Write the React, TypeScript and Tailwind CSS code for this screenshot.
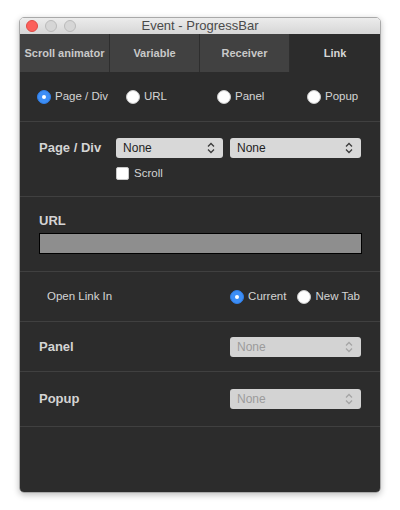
const font = "font-['Liberation_Sans',Arial,sans-serif]";

const Radio = ({ checked }: { checked?: boolean }) =>
  checked ? (
    <span className="flex h-[14px] w-[14px] shrink-0 items-center justify-center rounded-full bg-[#3d8ef6] border border-[#2f7de6]">
      <span className="h-[4px] w-[4px] rounded-full bg-white" />
    </span>
  ) : (
    <span className="h-[14px] w-[14px] shrink-0 rounded-full bg-white border border-[#c8c8c8]" />
  );

const Chevrons = ({ color }: { color: string }) => (
  <svg width="8" height="12" viewBox="0 0 8 12" fill="none" stroke={color} strokeWidth="1.3">
    <path d="M1 4.5 L4 1.5 L7 4.5" />
    <path d="M1 7.5 L4 10.5 L7 7.5" />
  </svg>
);

const Select = ({ width, disabled }: { width: string; disabled?: boolean }) => (
  <div
    className={`flex h-[20px] ${width} items-center justify-between rounded-[3px] pl-[7px] pr-[8px] text-[12px] ${
      disabled ? "bg-[#d3d3d3] text-[#9b9b9b]" : "bg-[#d8d8d8] text-[#1e1e1e]"
    }`}
  >
    <span>None</span>
    <Chevrons color={disabled ? "#a5a5a5" : "#3a3a3a"} />
  </div>
);

const tabs = ["Scroll animator", "Variable", "Receiver", "Link"];

export default function App() {
  return (
    <div className={`min-h-[510px] w-[400px] bg-white pt-[17px] pl-[19px] ${font}`}>
      <div className="w-[362px] overflow-hidden rounded-[5px] border border-[#a9a9a9] shadow-[0_2px_6px_rgba(0,0,0,0.25)]">
        {/* title bar */}
        <div className="relative flex h-[16px] items-center bg-gradient-to-b from-[#ececec] to-[#d6d6d6] px-[6px]">
          <div className="flex gap-[7px]">
            <span className="h-[12px] w-[12px] rounded-full bg-[#fc605b] border border-[#de4b45]" />
            <span className="h-[12px] w-[12px] rounded-full bg-[#d6d6d6] border border-[#bababa]" />
            <span className="h-[12px] w-[12px] rounded-full bg-[#d6d6d6] border border-[#bababa]" />
          </div>
          <div className="absolute inset-0 flex items-center justify-center text-[13px] text-[#4a4a4a]">
            Event - ProgressBar
          </div>
        </div>

        {/* tabs */}
        <div className="grid h-[38px] grid-cols-4 bg-[#2c2c2c]">
          {tabs.map((t, i) => (
            <div
              key={t}
              className={`flex items-center justify-center text-[11px] font-bold ${
                i === 3
                  ? "bg-[#2c2c2c] text-[#d6d6d6]"
                  : "bg-[#414141] text-[#c9c9c9] border-r border-[#2e2e2e]"
              }`}
            >
              {t}
            </div>
          ))}
        </div>

        <div className="bg-[#2c2c2c] text-[#d4d4d4]">
          {/* target type */}
          <div className="grid h-[50px] grid-cols-[89px_91px_90px_auto] items-center border-b border-[#404040] pl-[17px] text-[11.5px]">
            <label className="flex items-center gap-[4px]">
              <Radio checked />
              <span>Page / Div</span>
            </label>
            <label className="flex items-center gap-[4px]">
              <Radio />
              <span>URL</span>
            </label>
            <label className="flex items-center gap-[4px]">
              <Radio />
              <span>Panel</span>
            </label>
            <label className="flex items-center gap-[4px]">
              <Radio />
              <span>Popup</span>
            </label>
          </div>

          {/* page / div */}
          <div className="border-b border-[#404040] pt-[16px] pb-[16px] pl-[19px] pr-[19px]">
            <div className="flex items-center">
              <span className="w-[78px] text-[13px] font-bold">Page / Div</span>
              <Select width="w-[108px]" />
              <div className="ml-[7px]">
                <Select width="w-[131px]" />
              </div>
            </div>
            <label className="mt-[9px] ml-[77px] flex h-[13px] items-center gap-[5px] text-[11.5px] leading-[13px]">
              <span className="h-[13px] w-[13px] rounded-[2px] bg-white border border-[#c8c8c8]" />
              <span>Scroll</span>
            </label>
          </div>

          {/* url */}
          <div className="border-b border-[#404040] pt-[16px] pb-[17px] pl-[19px] pr-[18px]">
            <div className="text-[13px] font-bold leading-[16px]">URL</div>
            <div className="mt-[4px] h-[21px] border border-black bg-[#8e8e8e]" />
          </div>

          {/* open link in */}
          <div className="flex h-[50px] items-center border-b border-[#404040] pl-[27px] pr-[20px] text-[11.5px]">
            <span className="flex-1">Open Link In</span>
            <label className="flex items-center gap-[4px]">
              <Radio checked />
              <span>Current</span>
            </label>
            <label className="ml-[11px] flex items-center gap-[4px]">
              <Radio />
              <span>New Tab</span>
            </label>
          </div>

          {/* panel */}
          <div className="flex h-[50px] items-center justify-between border-b border-[#404040] pl-[19px] pr-[19px]">
            <span className="text-[13px] font-bold">Panel</span>
            <Select width="w-[131px]" disabled />
          </div>

          {/* popup */}
          <div className="flex h-[55px] items-center justify-between border-b border-[#404040] pl-[19px] pr-[19px]">
            <span className="text-[13px] font-bold">Popup</span>
            <Select width="w-[131px]" disabled />
          </div>

          <div className="h-[65px]" />
        </div>
      </div>
    </div>
  );
}
